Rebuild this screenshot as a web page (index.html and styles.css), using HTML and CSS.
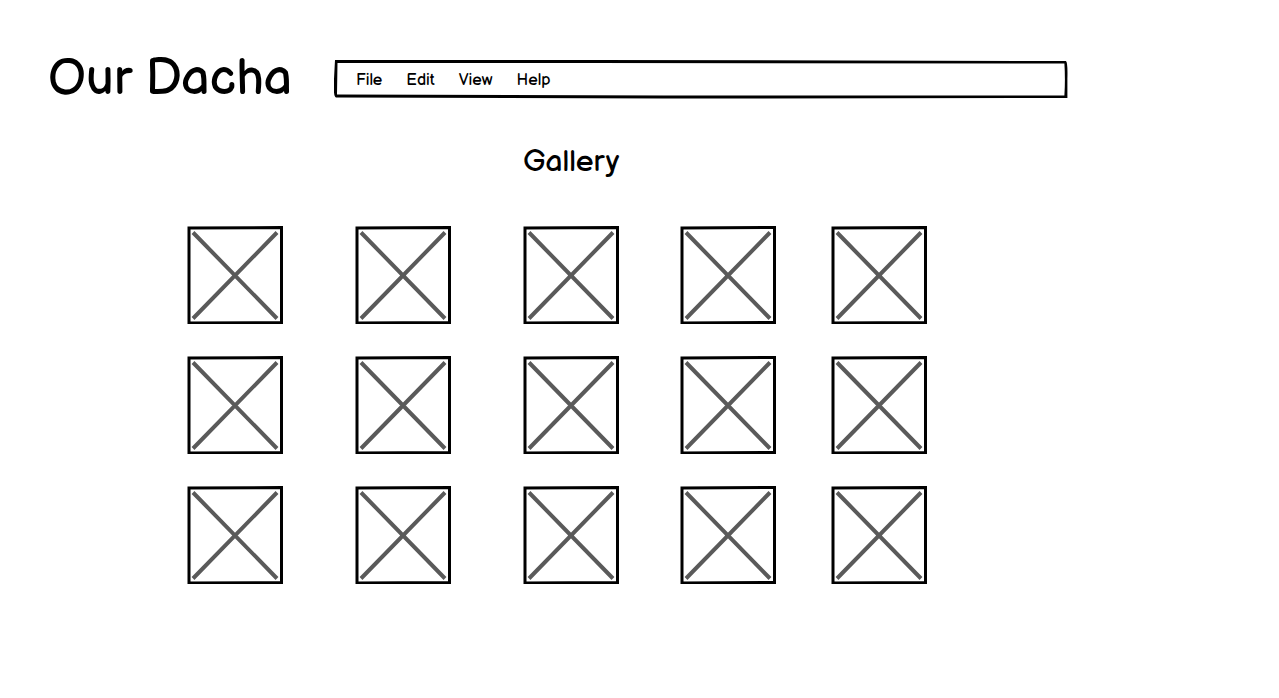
FILE: index.html
```html
<!DOCTYPE html>
<html lang="en">
<head>
<meta charset="utf-8">
<title>Our Dacha</title>
<link rel="stylesheet" href="styles.css">
</head>
<body>
<svg class="defs" width="0" height="0" aria-hidden="true">
  <symbol id="picture" viewBox="0 0 96 98">
    <path d="M2 2 L94.500 1.500 L94.500 96.500 L2 97 Z" fill="#fff" stroke="#000" stroke-width="3"/>
    <path d="M6 6.500 L90 92.500 M90 6.500 L6 92.500" fill="none" stroke="#5a5a5a" stroke-width="4"/>
  </symbol>
</svg>
<header class="header">
  <h1 class="site-title">Our Dacha</h1>
  <nav class="menu" aria-label="Main">
    <svg class="menu-frame" viewBox="0 0 735 40" preserveAspectRatio="none" aria-hidden="true">
      <path d="M1 1 L260 1 L733 2 Q735 3 734.500 20 L734.500 39 L330 39.500 L2 38.500 Q-1 38 0 20 Z M3.500 4 L3 35.500 L330 36.500 L731.500 36.500 Q732.500 20 731.500 4.500 L260 4 Z" fill="#000" fill-rule="evenodd"/>
    </svg>
    <a class="menu-link" href="#">File</a>
    <a class="menu-link" href="#">Edit</a>
    <a class="menu-link" href="#">View</a>
    <a class="menu-link" href="#">Help</a>
  </nav>
</header>
<main class="gallery">
  <h2 class="gallery-title">Gallery</h2>
  <svg class="picture"><use href="#picture"/></svg>
  <svg class="picture"><use href="#picture"/></svg>
  <svg class="picture"><use href="#picture"/></svg>
  <svg class="picture"><use href="#picture"/></svg>
  <svg class="picture"><use href="#picture"/></svg>
  <svg class="picture"><use href="#picture"/></svg>
  <svg class="picture"><use href="#picture"/></svg>
  <svg class="picture"><use href="#picture"/></svg>
  <svg class="picture"><use href="#picture"/></svg>
  <svg class="picture"><use href="#picture"/></svg>
  <svg class="picture"><use href="#picture"/></svg>
  <svg class="picture"><use href="#picture"/></svg>
  <svg class="picture"><use href="#picture"/></svg>
  <svg class="picture"><use href="#picture"/></svg>
  <svg class="picture"><use href="#picture"/></svg>
</main>
</body>
</html>
```
FILE: styles.css
```css
body {
  margin: 0;
  background: #fff;
  color: #000;
  font-family: "Balsamiq Sans", Lato, sans-serif;
}

.defs {
  position: absolute;
}

.header {
  display: flex;
  align-items: center;
  gap: 42px;
  padding: 47px 211px 0 48px;
}

.site-title {
  margin: 0;
  font-size: 50px;
  line-height: 64px;
  font-weight: 400;
  white-space: nowrap;
}

.menu {
  position: relative;
  flex: 1;
  display: flex;
  gap: 24px;
  padding: 12px 22px 8px;
}

.menu-frame {
  position: absolute;
  inset: 0;
  width: 100%;
  height: 100%;
}

.menu-link {
  position: relative;
  color: #000;
  font-size: 16px;
  line-height: 20px;
  text-decoration: none;
}

.gallery {
  display: grid;
  grid-template-columns: 168fr 168fr 157fr 151fr 96px;
  row-gap: 32px;
  padding: 30px 352px 40px 187px;
}

.gallery-title {
  grid-column: 3 / -1;
  margin: 0 0 11px;
  font-size: 30px;
  line-height: 42px;
  font-weight: 400;
}

.picture {
  width: 96px;
  height: 98px;
}
```
